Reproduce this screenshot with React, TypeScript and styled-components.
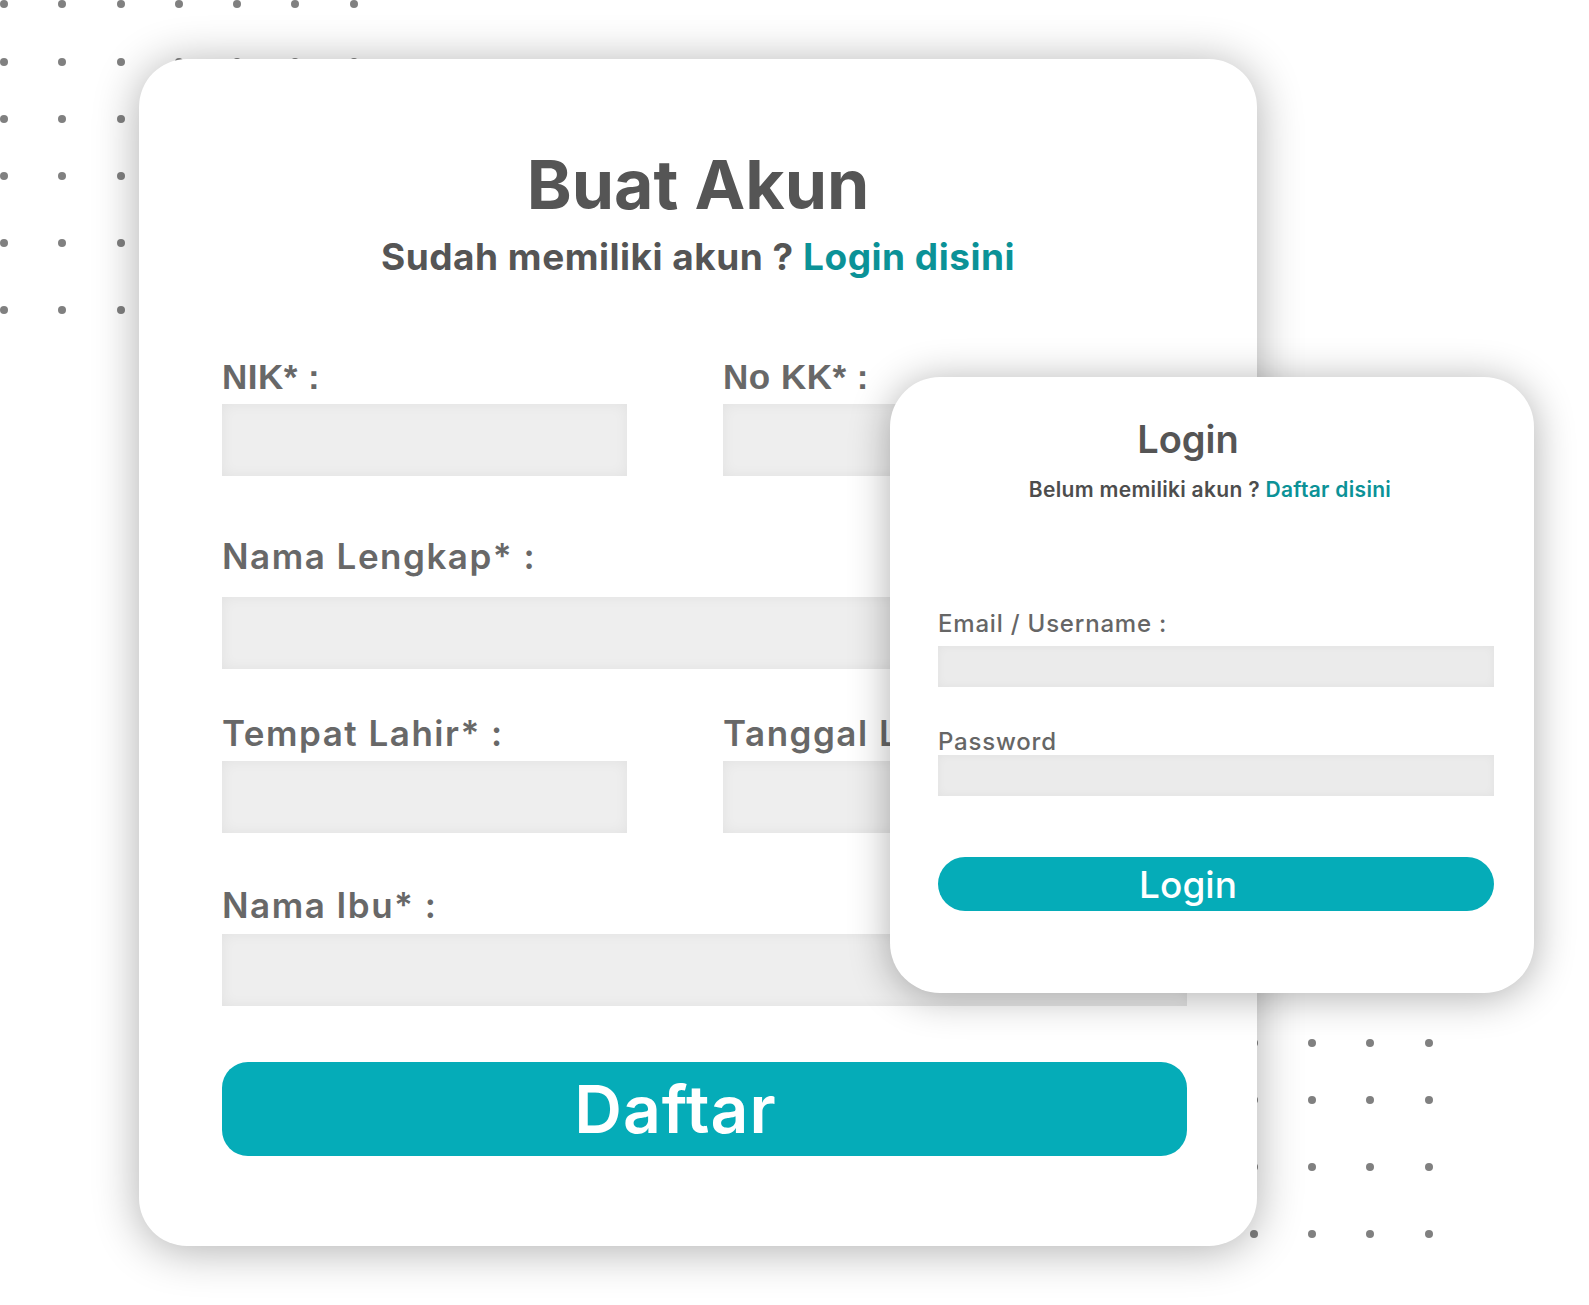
import styled, { createGlobalStyle } from "styled-components";

const GlobalStyle = createGlobalStyle`
  html, body {
    margin: 0;
    padding: 0;
    background: #ffffff;
  }
  body {
    font-family: "Inter", "Noto Sans", sans-serif;
  }
`;

const DOT_COLS = 7;
const DOT_ROWS = 6;

function Dots({ left, top }: { left: number; top: number }) {
  return (
    <DotGrid $left={left} $top={top}>
      {Array.from({ length: DOT_COLS * DOT_ROWS }).map((_, i) => (
        <Dot key={i} />
      ))}
    </DotGrid>
  );
}

export default function App() {
  return (
    <>
      <GlobalStyle />
      <Stage>
        <Dots left={0} top={0} />
        <Dots left={1075} top={924} />

        <RegisterCard>
          <Title>Buat Akun</Title>
          <Subtitle>
            Sudah memiliki akun ? <LinkText>Login disini</LinkText>
          </Subtitle>

          <FormGrid>
            <Field $mt={84}>
              <Label $plain>NIK* :</Label>
              <Input $gap={10} />
            </Field>
            <Field $mt={84}>
              <Label $plain>No KK* :</Label>
              <Input $gap={10} />
            </Field>

            <Field $mt={63} $wide>
              <Label>Nama Lengkap* :</Label>
              <Input $gap={23} />
            </Field>

            <Field $mt={47}>
              <Label>Tempat Lahir* :</Label>
              <Input $gap={10} />
            </Field>
            <Field $mt={47}>
              <Label>Tanggal Lahir* :</Label>
              <Input $gap={10} />
            </Field>

            <Field $mt={55} $wide>
              <Label>Nama Ibu* :</Label>
              <Input $gap={11} />
            </Field>
          </FormGrid>

          <SubmitButton>Daftar</SubmitButton>
        </RegisterCard>

        <LoginCard>
          <LoginTitle>Login</LoginTitle>
          <LoginSub>
            Belum memiliki akun ? <LinkText>Daftar disini</LinkText>
          </LoginSub>

          <LoginLabel $mt={112}>Email / Username :</LoginLabel>
          <LoginInput $gap={10} />

          <LoginLabel $mt={43}>Password</LoginLabel>
          <LoginInput $gap={1} />

          <LoginButton>Login</LoginButton>
        </LoginCard>
      </Stage>
    </>
  );
}

const Stage = styled.div`
  position: relative;
  width: 1589px;
  height: 1305px;
  padding: 59px 0 0 139px;
  box-sizing: border-box;
  overflow: hidden;
  background: #ffffff;
`;

const DotGrid = styled.div<{ $left: number; $top: number }>`
  position: absolute;
  left: ${(p) => p.$left}px;
  top: ${(p) => p.$top}px;
  display: grid;
  grid-template-columns: repeat(${DOT_COLS}, 58.3px);
  grid-template-rows: 58px 57px 57px 67px 67px 8px;
`;

const Dot = styled.span`
  width: 8px;
  height: 8px;
  border-radius: 50%;
  background: #808080;
`;

const RegisterCard = styled.div`
  position: relative;
  width: 1118px;
  height: 1187px;
  padding: 91px 70px 0 83px;
  box-sizing: border-box;
  background: #ffffff;
  border-radius: 48px;
  box-shadow: 0 4px 46px rgba(0, 0, 0, 0.32);
  display: flex;
  flex-direction: column;
`;

const Title = styled.h1`
  margin: 0 13px 0 0;
  font-size: 68px;
  line-height: 1;
  font-weight: 700;
  color: #555555;
  text-align: center;
`;

const Subtitle = styled.p`
  margin: 20px 13px 0 0;
  font-size: 37px;
  line-height: 1;
  font-weight: 700;
  letter-spacing: 0.5px;
  color: #555555;
  text-align: center;
`;

const LinkText = styled.span`
  color: #0b9297;
`;

const FormGrid = styled.div`
  display: grid;
  grid-template-columns: 405px 1fr;
  column-gap: 96px;
`;

const Field = styled.div<{ $mt: number; $wide?: boolean }>`
  display: flex;
  flex-direction: column;
  margin-top: ${(p) => p.$mt}px;
  grid-column: ${(p) => (p.$wide ? "1 / -1" : "auto")};
`;

const Label = styled.label<{ $plain?: boolean }>`
  font-family: ${(p) =>
    p.$plain ? `"Liberation Sans", Arial, sans-serif` : `"Inter", "Noto Sans", sans-serif`};
  font-size: 35px;
  line-height: 1;
  font-weight: ${(p) => (p.$plain ? 700 : 600)};
  letter-spacing: ${(p) => (p.$plain ? 0.5 : 1.5)}px;
  color: #686868;
  white-space: nowrap;
`;

const Input = styled.div<{ $gap: number }>`
  margin-top: ${(p) => p.$gap}px;
  height: 72px;
  background: #eeeeee;
  box-shadow: inset 0 0 14px rgba(0, 0, 0, 0.055);
`;

const SubmitButton = styled.button`
  margin-top: 56px;
  height: 94px;
  border: none;
  border-radius: 26px;
  background: #05acb8;
  color: #ffffff;
  font-family: "Inter", "Noto Sans", sans-serif;
  font-size: 66px;
  font-weight: 600;
  letter-spacing: 1px;
  line-height: 1;
  padding: 0 58px 0 0;
`;

const LoginCard = styled.div`
  position: absolute;
  left: 890px;
  top: 377px;
  width: 644px;
  height: 616px;
  padding: 43px 40px 0 48px;
  box-sizing: border-box;
  background: #ffffff;
  border-radius: 50px;
  box-shadow: 0 4px 40px rgba(0, 0, 0, 0.32);
  display: flex;
  flex-direction: column;
`;

const LoginTitle = styled.h2`
  margin: 0;
  padding-right: 56px;
  font-size: 38px;
  line-height: 1;
  font-weight: 600;
  color: #555555;
  text-align: center;
`;

const LoginSub = styled.p`
  margin: 21px 0 0;
  padding-right: 12px;
  font-size: 21px;
  line-height: 1;
  font-weight: 600;
  letter-spacing: 0.3px;
  color: #4d4d4d;
  text-align: center;
`;

const LoginLabel = styled.label<{ $mt: number }>`
  margin-top: ${(p) => p.$mt}px;
  font-size: 24px;
  line-height: 1;
  font-weight: 500;
  letter-spacing: 0.8px;
  color: #666666;
`;

const LoginInput = styled.div<{ $gap: number }>`
  margin-top: ${(p) => p.$gap}px;
  height: 41px;
  background: #ebebeb;
  box-shadow: inset 0 0 10px rgba(0, 0, 0, 0.045);
`;

const LoginButton = styled.button`
  margin-top: 61px;
  height: 54px;
  border: none;
  border-radius: 27px;
  background: #05acb8;
  color: #ffffff;
  font-family: "Inter", "Noto Sans", sans-serif;
  font-size: 37px;
  font-weight: 500;
  line-height: 1;
  padding: 0 56px 0 0;
`;
